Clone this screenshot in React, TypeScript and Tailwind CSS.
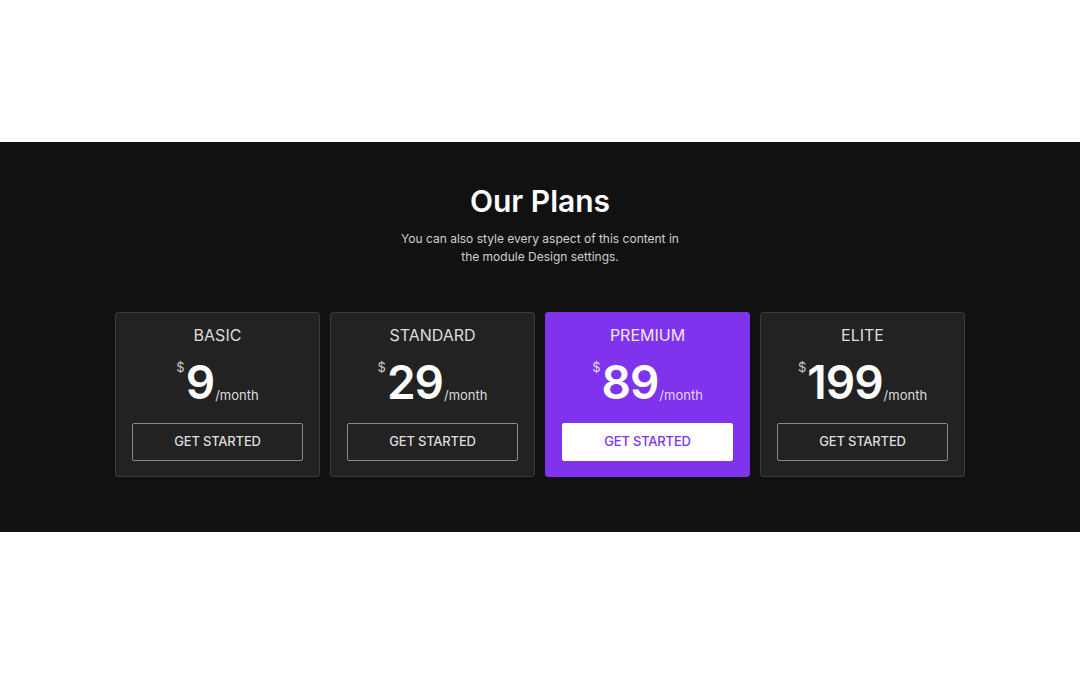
const plans = [
  { name: 'BASIC', price: '9', featured: false },
  { name: 'STANDARD', price: '29', featured: false },
  { name: 'PREMIUM', price: '89', featured: true },
  { name: 'ELITE', price: '199', featured: false },
];

const PlanCard = ({ name, price, featured }: { name: string; price: string; featured: boolean }) => (
  <div
    className={`flex h-[165px] w-[205px] flex-col items-center rounded-[3px] border px-4 pt-[12px] ${
      featured ? 'border-[#7f33ec] bg-[#7f33ec]' : 'border-[#3a3a3a] bg-[#222222]'
    }`}
  >
    <div className={`text-[16px] leading-[20px] ${featured ? 'text-[#f1e6ff]' : 'text-[#dddddd]'}`}>{name}</div>
    <div className="mt-[8px] flex h-[52px] items-end">
      <span className={`mb-[31px] mr-[1px] text-[13px] leading-none ${featured ? 'text-[#e6d6ff]' : 'text-[#cccccc]'}`}>$</span>
      <span className="text-[46px] font-semibold leading-[46px] tracking-[-1px] text-white">{price}</span>
      <span className={`mb-[3px] ml-[1px] text-[13px] leading-none ${featured ? 'text-[#e6d6ff]' : 'text-[#dddddd]'}`}>/month</span>
    </div>
    <button
      className={`mt-[18px] h-[38px] w-full rounded-[2px] text-[13px] font-medium tracking-[-0.2px] ${
        featured ? 'border border-white bg-white text-[#7f33ec]' : 'border border-[#8a8a8a] text-[#dddddd]'
      }`}
    >
      GET STARTED
    </button>
  </div>
);

export default function App() {
  return (
    <div className="flex h-[675px] w-full flex-col bg-white" style={{ fontFamily: 'Inter, "Noto Sans", sans-serif' }}>
      <div className="h-[142px]" />
      <section className="flex h-[390px] flex-col items-center bg-[#111111] pt-[41px]">
        <h2 className="text-[30px] font-semibold leading-[36px] text-white">Our Plans</h2>
        <p className="mt-[11px] w-[292px] text-center text-[12px] leading-[18px] text-[#cfcfcf]">
          You can also style every aspect of this content in the module Design settings.
        </p>
        <div className="mt-[46px] flex gap-[10px]">
          {plans.map((p) => (
            <PlanCard key={p.name} {...p} />
          ))}
        </div>
      </section>
      <div className="flex-1" />
    </div>
  );
}
